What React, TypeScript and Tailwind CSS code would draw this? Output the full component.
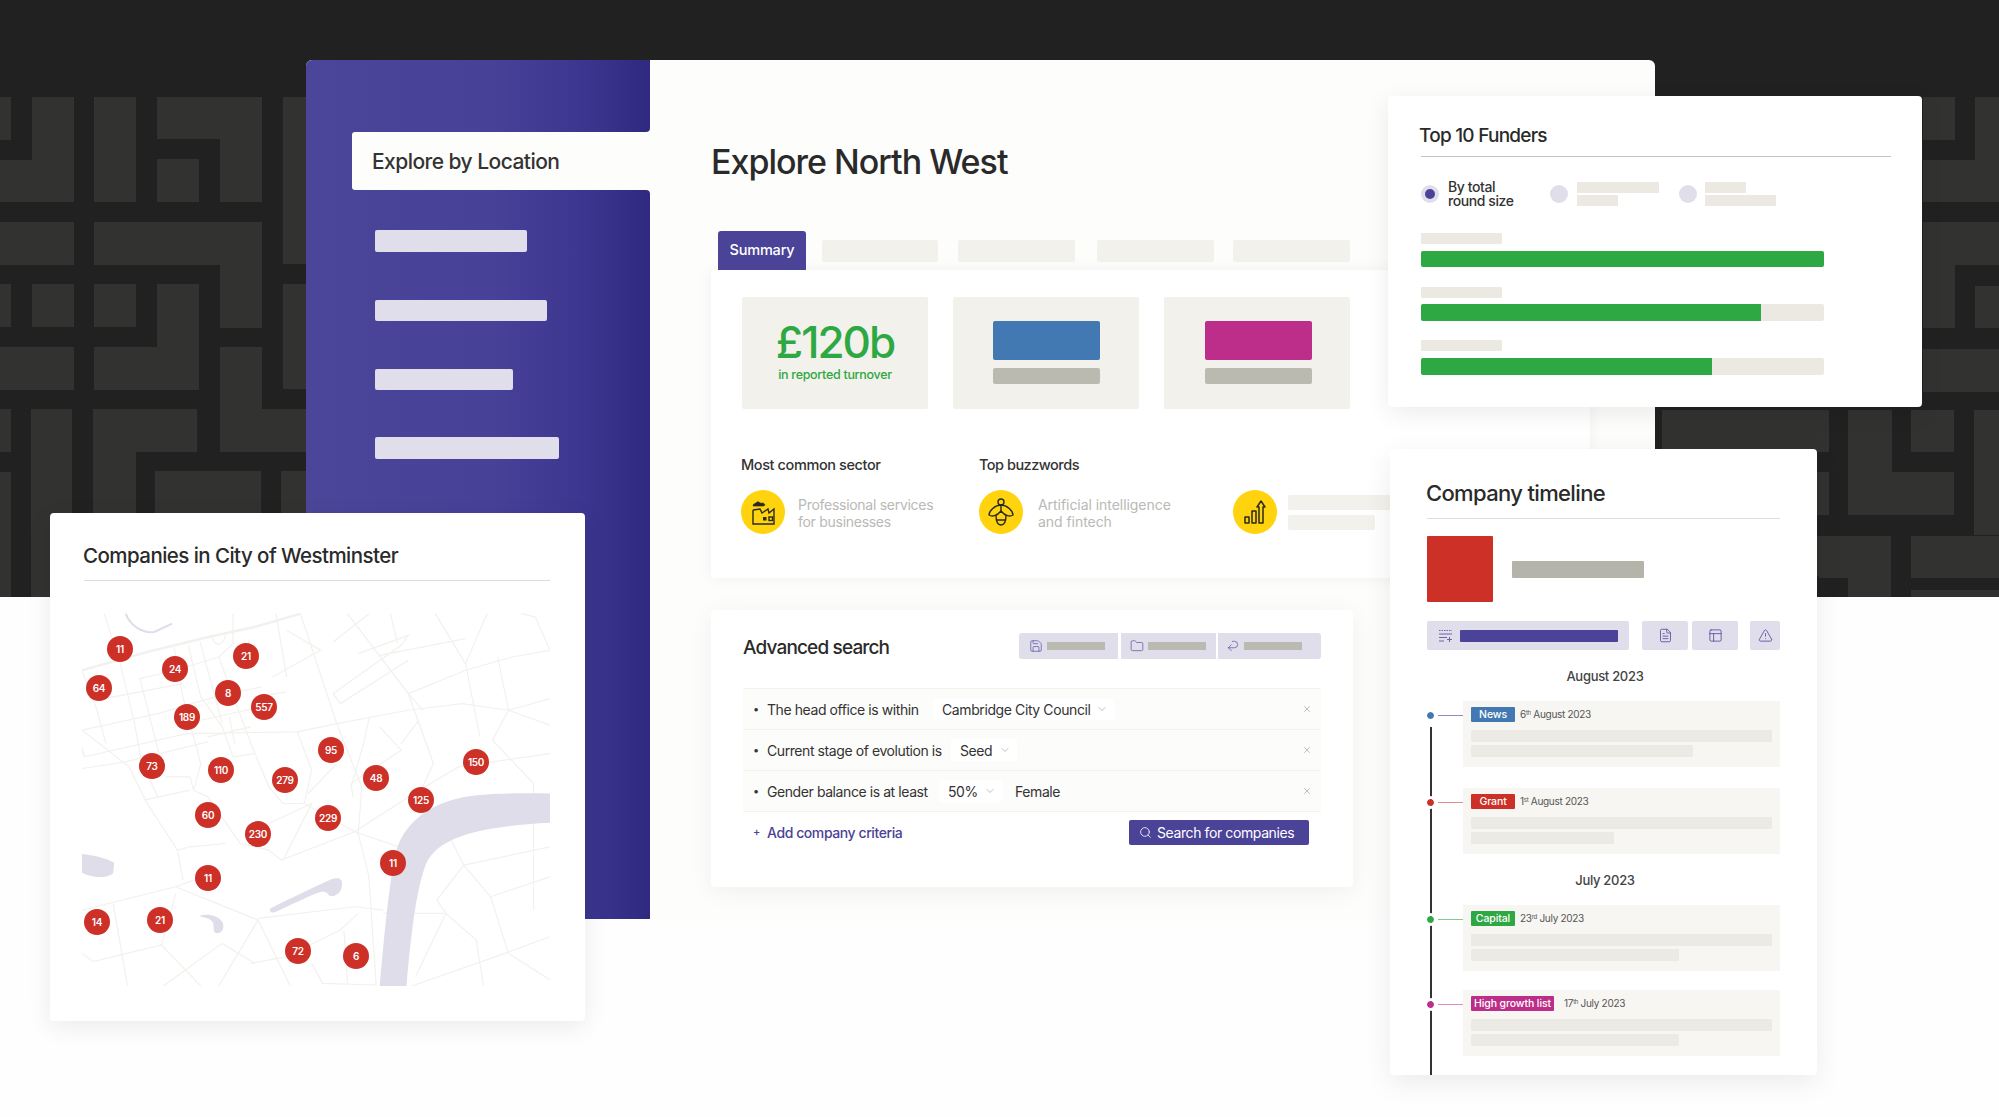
import React from "react";
import { Save, Folder, Undo2, FileText, PanelsTopLeft, TriangleAlert, Search, ChevronDown, X } from "lucide-react";

const tiles: [number, number, number, number][] = [
  [0, 97, 11, 43], [32, 97, 42, 105], [0, 160, 74, 42], [94, 97, 42, 105], [157, 97, 105, 42], [220, 139, 42, 63], [157, 159, 42, 43],
  [283, 97, 30, 167], [0, 222, 74, 43], [94, 222, 168, 43], [220, 265, 42, 63], [0, 284, 11, 43], [32, 284, 42, 43], [94, 284, 42, 43],
  [157, 284, 42, 106], [94, 347, 105, 43], [0, 347, 74, 43], [220, 347, 42, 105], [220, 409, 90, 43], [283, 284, 30, 105],
  [0, 409, 11, 43], [0, 472, 11, 125], [31, 409, 41, 188], [93, 409, 104, 43], [93, 452, 43, 145], [155, 471, 106, 126], [281, 471, 30, 126],
  [1923, 97, 32, 43], [1975, 97, 24, 63], [1923, 160, 76, 42], [1923, 222, 76, 43], [1923, 265, 32, 63], [1975, 286, 24, 42], [1923, 349, 76, 43],
  [1662, 410, 167, 42], [1662, 472, 167, 43], [1662, 536, 167, 40], [1848, 410, 44, 105], [1848, 472, 106, 43], [1911, 410, 43, 42], [1974, 410, 25, 125],
  [1911, 536, 88, 42], [1819, 536, 72, 42], [1848, 578, 43, 19], [1911, 590, 88, 7],
];

const roads = [
  "M180 310 L225 460 L265 640 L285 760 L330 860", "M118 480 L160 600 L185 700", "M280 505 L345 780",
  "M375 410 L400 560 L450 760 L430 840 L470 860 L560 1000 L640 1020 L675 1050 L880 965", "M415 405 L450 560 L510 650 L540 740 L600 730",
  "M448 395 L510 640", "M480 378 C490 410 510 410 520 375", "M540 310 L540 400 L500 440 L590 700 L640 830 L680 880 L740 880 L890 970",
  "M118 660 L330 610 L490 560 L620 530", "M118 710 L125 740 L410 670 L720 665 L830 640 L1030 600 L1180 580 L1310 600 L1426 645",
  "M118 775 L240 755 L470 695", "M118 660 L250 770 L300 880 L385 1020 L400 1110", "M660 310 L690 500", "M730 315 L830 640 L900 830 L890 970",
  "M820 395 L920 310", "M690 360 L785 420 L650 500", "M860 310 L1030 550 L1100 760 L1070 830", "M890 430 L1030 375 L1010 405 L820 550 L840 580 L1030 450",
  "M980 310 L1000 400", "M950 435 L1190 385", "M1105 310 L1190 460 L1230 680", "M1250 310 L1190 460", "M1030 550 L1190 480 L1320 440 L1426 420",
  "M1345 310 L1385 320 L1426 420", "M1280 440 L1310 600 L1265 690 L1380 820 L1380 1200", "M1070 600 L1030 550", "M1426 565 L1310 600",
  "M720 665 L760 780 L740 880", "M830 760 L750 850", "M950 650 L1010 720 L870 820 L875 860", "M920 625 L905 700 L870 830", "M1010 700 L1060 630",
  "M640 940 L760 880 L680 1050", "M880 965 L1030 1020", "M880 965 L1060 840 L1170 770 L1426 730", "M1150 990 L1185 1065 L1260 1160 L1310 1330 L1426 1410",
  "M1185 1065 L1426 1010", "M1185 1065 L1110 1170 L1135 1210 L1220 1290 L1240 1428", "M1260 1160 L1426 1100", "M960 1210 L1130 1210",
  "M1040 1428 L1300 1330 L1426 1280", "M1135 1210 L1050 1400", "M118 1200 L380 1130 L430 1110", "M380 1130 L610 1230 L700 1428", "M610 1225 L880 1190 L960 1200",
  "M610 1230 L500 1428", "M205 1180 L245 1428", "M118 1330 L150 1355 L340 1305 L450 1428", "M340 1305 L380 1150", "M590 1360 L690 1340 L840 1260 L890 1210",
  "M760 1360 L790 1420 L940 1425 L920 1100 L890 970", "M850 1260 L860 1420", "M345 1428 L510 1300 L600 1360",
  "M280 505 L380 480 L500 440", "M180 565 L400 520", "M450 630 L620 590", "M470 680 L590 650", "M530 620 L545 700", "M600 560 L690 545", "M118 720 L125 740",
  "M290 870 L420 840", "M520 1000 L420 1010 L385 1020", "M350 800 L420 800 L430 840",
];

const pins: [string, number, number][] = [
  ["11", 119, 649], ["24", 174, 669], ["21", 245, 656], ["64", 98, 688], ["8", 227, 693], ["557", 263, 707], ["189", 186, 717], ["95", 330, 750],
  ["73", 151, 766], ["110", 220, 770], ["279", 284, 780], ["48", 375, 778], ["150", 475, 762], ["125", 420, 800], ["60", 207, 815], ["229", 327, 818],
  ["230", 257, 834], ["11", 207, 878], ["11", 392, 863], ["14", 96, 922], ["21", 159, 920], ["72", 297, 951], ["6", 355, 956],
];

function Backdrop() {
  return (
    <svg className="absolute left-0 top-0" width="1999" height="597" viewBox="0 0 1999 597">
      <rect width="1999" height="597" fill="#212121" />
      {tiles.map(([x, y, w, h], i) => (
        <rect key={i} x={x} y={y} width={w} height={h} fill="#323231" />
      ))}
    </svg>
  );
}

function FactoryIcon() {
  return (
    <svg width="26" height="28" viewBox="0 0 26 28" fill="none" stroke="#2a2a20" strokeWidth="1.4">
      <path d="M3 12V26H24V11L19 15L18 11L12 15L10 11L3 12" />
      <path d="M3 8C3 5 6 6 7 4C9 3 10 6 12 5C15 5 16 8 13 8Z" fill="#2a2a20" strokeWidth="0.6" />
      <rect x="13" y="19" width="3.5" height="3.5" fill="#2a2a20" stroke="none" />
      <rect x="19" y="19" width="3.5" height="3.5" />
    </svg>
  );
}

function BeeIcon() {
  return (
    <svg width="28" height="30" viewBox="0 0 28 30" fill="none" stroke="#2a2a20" strokeWidth="1.4" strokeLinejoin="round">
      <circle cx="14" cy="5" r="3" />
      <path d="M14 8C8 8 2 14 2 18C5 20 10 19 14 14C18 19 23 20 26 18C26 14 20 8 14 8Z" />
      <path d="M9 18C9 24 11 28 14 28C17 28 19 24 19 18" />
      <path d="M14 8V15M9.5 23H18.5" />
    </svg>
  );
}

function GrowthIcon() {
  return (
    <svg width="26" height="28" viewBox="0 0 26 28" fill="none" stroke="#2a2a20" strokeWidth="1.5" strokeLinejoin="round">
      <rect x="3" y="19" width="4" height="6" />
      <rect x="10" y="13" width="4" height="12" />
      <path d="M17 25V9H15L19 3L23 9H21V25Z" />
    </svg>
  );
}

function SortAddIcon() {
  return (
    <svg width="15" height="15" viewBox="0 0 15 15" fill="none" stroke="#6a64a8" strokeWidth="1">
      <path d="M1 2.5H14" strokeDasharray="1.5 1" />
      <path d="M1 6H14M1 9.5H9M1 13H6M11.5 9V14M9 11.5H14" />
    </svg>
  );
}

function Tile({ className }: { className: string }) {
  return <div className={"rounded-[2px] " + className} />;
}

function StatTile({ children }: { children: React.ReactNode }) {
  return <div className="flex h-[112px] w-[186px] flex-col items-center rounded-[2px] bg-[#f3f1ec]">{children}</div>;
}

function StatPlaceholder({ color, shift }: { color: string; shift: string }) {
  return (
    <>
      <div className={"mt-[24px] h-[39px] w-[107px] rounded-[2px] " + color + " " + shift} />
      <div className={"mt-[8px] h-[16px] w-[107px] rounded-[2px] bg-[#babab1] " + shift} />
    </>
  );
}

function Sector({ icon, lines, gap }: { icon: React.ReactNode; lines: string[]; gap: string }) {
  return (
    <div className="flex items-center">
      <div className="flex h-[44px] w-[44px] items-center justify-center rounded-full bg-[#ffd30d]">{icon}</div>
      <div className={"mt-[2px] text-[14px] leading-[17px] text-[#b9b9b5] " + gap}>
        {lines.map((l) => (
          <div key={l}>{l}</div>
        ))}
      </div>
    </div>
  );
}

function ToolbarButton({ icon, className }: { icon: React.ReactNode; className: string }) {
  return (
    <div className={"flex h-[26px] items-center bg-[#e0deea] text-[#5a54a3] " + className}>
      {icon}
      <div className="ml-[4px] h-[8px] w-[58px] bg-[#babab1]" />
    </div>
  );
}

function Criteria({ text, textW, children }: { text: string; textW: string; children: React.ReactNode }) {
  return (
    <div className="flex h-[41px] items-center border-b border-[#f3f3ee] bg-[#fcfcfa] pl-[10px] pr-[9px] text-[14px] tracking-[-0.42px] text-[#333]">
      <span className="w-[14px] text-[11px]">•</span>
      <span className={textW}>{text}</span>
      {children}
      <X className="ml-auto text-[#999]" size={10} strokeWidth={1.5} />
    </div>
  );
}

function Select({ label, className }: { label: string; className: string }) {
  return (
    <div className={"flex h-[22px] items-center rounded-[2px] bg-white pl-[9px] text-[14px] " + className}>
      <span>{label}</span>
      <ChevronDown className="ml-auto mr-[6px] text-[#999]" size={12} strokeWidth={1.25} />
    </div>
  );
}

function FunderBar({ labelMt, barH, fill }: { labelMt: string; barH: string; fill: string }) {
  return (
    <div className={labelMt}>
      <div className="h-[11px] w-[81px] rounded-[1px] bg-[#ece9e3]" />
      <div className={"w-[403px] overflow-hidden rounded-[2px] bg-[#ece9e3] " + barH}>
        <div className={"h-full bg-[#2ea843] " + fill} />
      </div>
    </div>
  );
}

function Radio({ on }: { on?: boolean }) {
  return (
    <div className="flex h-[18px] w-[18px] items-center justify-center rounded-full bg-[#e0deea]">
      {on && <div className="h-[10px] w-[10px] rounded-full bg-[#4a4397]" />}
    </div>
  );
}

function Event({
  badge, badgeBg, badgeW, dateW, date, sup, rest, line2, dot, rule, className,
}: {
  badge: string; badgeBg: string; badgeW: string; dateW: string; date: string; sup: string; rest: string; line2: string; dot: string; rule: string; className: string;
}) {
  return (
    <div className={"flex " + className}>
      <div className="mt-[10px] flex h-[9px] w-[36px] items-center">
        <div className={"relative h-[7px] w-[7px] rounded-full outline-[3px] outline-white " + dot} />
        <div className={"ml-[4px] h-[1.5px] w-[25px] " + rule} />
      </div>
      <div className="h-[66px] w-[317px] bg-[#f7f6f2] px-[8px] pt-[6px]">
        <div className="flex h-[15px] items-center">
          <div className={"flex h-[15px] items-center justify-center rounded-[1px] text-[10.5px] font-medium tracking-[-0.1px] text-white " + badgeBg + " " + badgeW}>{badge}</div>
          <div className={"text-[10px] tracking-[-0.3px] text-[#555] " + dateW}>
            {date}
            <sup className="text-[6px]">{sup}</sup> {rest}
          </div>
        </div>
        <div className="mt-[8px] h-[12px] w-[301px] rounded-[1px] bg-[#eceae4]" />
        <div className={"mt-[3px] h-[12px] rounded-[1px] bg-[#eceae4] " + line2} />
      </div>
    </div>
  );
}

export default function App() {
  const sidebarBg = "bg-[linear-gradient(90deg,#4b4699_0%,#474198_55%,#3c3690_80%,#2f2a80_100%)]";
  return (
    <div className="relative h-[1117px] w-[1999px] overflow-hidden bg-[#fefefe] text-[#2a2a2a] [font-family:Inter,'Liberation_Sans',sans-serif]">
      <Backdrop />

      {/* Main window */}
      <div className="absolute left-[306px] top-[60px] flex h-[859px] w-[1349px] rounded-t-[6px] bg-[#fdfdfb]">
        <aside className="flex w-[344px] flex-col">
          <div className={"h-[72px] rounded-tl-[6px] rounded-br-[4px] " + sidebarBg} />
          <div className={"pl-[46px] " + sidebarBg}>
            <div className="flex h-[58px] items-center rounded-l-[3px] bg-[#fdfdfb] pl-[20px] pt-[2px] text-[21px] font-medium tracking-[-0.55px] text-[#333]">
              Explore by Location
            </div>
          </div>
          <div className={"flex-1 rounded-tr-[4px] pl-[69px] pt-[40px] " + sidebarBg}>
            <div className="h-[22px] w-[152px] rounded-[2px] bg-[#e0deea]" />
            <div className="mt-[48px] h-[21px] w-[172px] rounded-[2px] bg-[#e0deea]" />
            <div className="mt-[48px] h-[21px] w-[138px] rounded-[2px] bg-[#e0deea]" />
            <div className="mt-[47px] h-[22px] w-[184px] rounded-[2px] bg-[#e0deea]" />
          </div>
        </aside>

        <main className="pl-[61px] pt-[82px]">
          <h1 className="h-[40px] text-[34px] font-medium leading-[40px] tracking-[-1px] text-[#2a2a2a]">Explore North West</h1>

          <div className="ml-[7px] mt-[49px] flex h-[39px] items-center">
            <div className="flex h-[39px] w-[88px] items-center justify-center rounded-t-[3px] bg-[#4a4397] pb-[2px] text-[14.5px] font-medium tracking-[-0.2px] text-white">Summary</div>
            <Tile className="ml-[16px] h-[22px] w-[116px] bg-[#f3f1ec]" />
            <Tile className="ml-[20px] h-[22px] w-[117px] bg-[#f3f1ec]" />
            <Tile className="ml-[22px] h-[22px] w-[117px] bg-[#f3f1ec]" />
            <Tile className="ml-[19px] h-[22px] w-[117px] bg-[#f3f1ec]" />
          </div>

          <section className="h-[308px] w-[879px] rounded-[2px] bg-white pl-[30px] pt-[27px] shadow-[0_0_16px_rgba(0,0,0,0.05)]">
            <div className="ml-[1px] flex gap-[25px]">
              <StatTile>
                <div className="mt-[20px] text-[44px] font-medium leading-[50px] tracking-[-2px] text-[#2ea843]">£120b</div>
                <div className="text-[12.5px] font-medium leading-[16px] tracking-[-0.3px] text-[#2ea843]">in reported turnover</div>
              </StatTile>
              <StatTile><StatPlaceholder color="bg-[#4279b2]" shift="ml-0" /></StatTile>
              <StatTile><StatPlaceholder color="bg-[#bd2e8a]" shift="ml-[2px]" /></StatTile>
            </div>
            <div className="mt-[46px] grid grid-cols-[238px_254px_1fr] grid-rows-[20px_auto] gap-y-[15px]">
              <div className="text-[14.5px] font-medium leading-[20px] tracking-[-0.4px] text-[#333]">Most common sector</div>
              <div className="text-[14.5px] font-medium leading-[20px] tracking-[-0.5px] text-[#333]">Top buzzwords</div>
              <div />
              <Sector icon={<FactoryIcon />} lines={["Professional services", "for businesses"]} gap="ml-[13px] tracking-[-0.28px]" />
              <Sector icon={<BeeIcon />} lines={["Artificial intelligence", "and fintech"]} gap="ml-[15px] tracking-[-0.05px]" />
              <div className="flex items-center">
                <div className="flex h-[44px] w-[44px] items-center justify-center rounded-full bg-[#ffd30d]"><GrowthIcon /></div>
                <div className="ml-[11px]">
                  <div className="h-[15px] w-[150px] rounded-[2px] bg-[#f3f1ec]" />
                  <div className="mt-[5px] h-[15px] w-[87px] rounded-[2px] bg-[#f3f1ec]" />
                </div>
              </div>
            </div>
          </section>

          <section className="mt-[32px] h-[277px] w-[642px] rounded-[4px] bg-white px-[32px] pt-[23px] shadow-[0_4px_24px_rgba(0,0,0,0.06)]">
            <div className="flex h-[26px] items-center justify-between">
              <h2 className="mt-[4px] text-[19px] font-medium tracking-[-0.85px] text-[#2a2a2a]">Advanced search</h2>
              <div className="flex gap-[2.5px]">
                <ToolbarButton className="w-[99px] rounded-l-[3px] pl-[10px]" icon={<Save size={14} strokeWidth={1.25} />} />
                <ToolbarButton className="w-[95px] pl-[9px]" icon={<Folder size={14} strokeWidth={1.25} />} />
                <ToolbarButton className="w-[103px] rounded-r-[3px] pl-[8px]" icon={<Undo2 size={14} strokeWidth={1.25} className="-scale-y-100" />} />
              </div>
            </div>
            <div className="mt-[29px] border-t border-[#f3f3ee]">
              <Criteria text="The head office is within" textW="w-[166px]">
                <Select label="Cambridge City Council" className="w-[181px] tracking-[-0.4px]" />
              </Criteria>
              <Criteria text="Current stage of evolution is" textW="w-[184px]">
                <Select label="Seed" className="w-[66px]" />
              </Criteria>
              <Criteria text="Gender balance is at least" textW="w-[172px]">
                <Select label="50%" className="w-[63px]" />
                <span className="ml-[13px]">Female</span>
              </Criteria>
              <div className="flex h-[41px] items-center pl-[10px] pr-[12px] text-[14px] font-medium tracking-[-0.42px] text-[#4a4397]">
                <span className="w-[14px] text-[11px]">+</span>
                <span>Add company criteria</span>
                <div className="ml-auto flex h-[25px] w-[180px] items-center rounded-[2px] bg-[#4a4397] pl-[10px] text-white">
                  <Search size={13} strokeWidth={1.5} />
                  <span className="ml-[5px] font-normal tracking-[-0.4px]">Search for companies</span>
                </div>
              </div>
            </div>
          </section>
        </main>
      </div>

      {/* Westminster map card */}
      <section className="absolute left-[50px] top-[513px] h-[508px] w-[535px] rounded-[4px] bg-white pl-[33px] pt-[30px] shadow-[0_6px_24px_rgba(0,0,0,0.08)]">
        <h2 className="h-[26px] text-[20.5px] font-medium leading-[26px] tracking-[-0.55px]">Companies in City of Westminster</h2>
        <div className="ml-[1px] mt-[11px] w-[466px] border-b border-[#dcdcd8]" />
        <div className="relative -ml-[1px] mt-[32px] h-[373px] w-[468px]">
          <svg className="h-full w-full" viewBox="118 308 1308 1120" preserveAspectRatio="none" fill="none">
            {roads.map((d, i) => (
              <path key={i} d={d} stroke="#f3f1ed" strokeWidth="1.2" vectorEffect="non-scaling-stroke" />
            ))}
            <path d="M118 480 L300 425 L480 378 L600 350 L730 310" stroke="#f3f1ed" strokeWidth="2.5" vectorEffect="non-scaling-stroke" />
            <path d="M1426 850 C1300 848 1210 850 1150 870 C1070 895 1020 950 1000 1010 C980 1080 965 1250 950 1428 L1025 1428 C1035 1300 1050 1150 1075 1075 C1095 1010 1150 985 1220 965 C1280 950 1350 942 1426 938 Z" fill="#dfdde9" />
            <path d="M118 1032 C150 1035 185 1045 208 1058 L205 1090 C185 1105 150 1105 118 1088 Z" fill="#dfdde9" />
            <path d="M645 1195 C700 1165 770 1130 810 1110 C830 1100 845 1105 845 1120 C845 1140 835 1160 810 1158 C800 1140 790 1140 750 1160 C710 1180 680 1195 660 1205 C648 1210 640 1205 645 1195 Z" fill="#dfdde9" />
            <path d="M445 1218 C470 1210 495 1215 510 1235 C520 1255 505 1275 490 1268 C480 1255 495 1235 470 1225 Z" fill="#dfdde9" />
            <path d="M240 310 C255 350 290 370 320 365 L370 340" stroke="#dfdde9" strokeWidth="2" vectorEffect="non-scaling-stroke" />
          </svg>
          {pins.map(([n, x, y], i) => (
            <div
              key={i}
              className="absolute flex h-[26px] w-[26px] items-center justify-center rounded-full bg-[#cc3027] text-[10px] font-semibold tracking-[-0.3px] text-white"
              style={{ left: x - 82 - 12, top: y - 613 - 13 }}
            >
              {n}
            </div>
          ))}
        </div>
      </section>

      {/* Funders card */}
      <section className="absolute left-[1388px] top-[96px] h-[311px] w-[534px] rounded-[4px] bg-white pl-[31px] pt-[27px] shadow-[0_6px_24px_rgba(0,0,0,0.08)]">
        <h2 className="mt-[1px] h-[23px] text-[19px] font-medium leading-[24px] tracking-[-0.75px]">Top 10 Funders</h2>
        <div className="ml-[2px] mt-[9px] w-[470px] border-b border-[#c5c5c0]" />
        <div className="ml-[2px] mt-[23px] flex h-[28px]">
          <div className="flex w-[129px] items-center">
            <Radio on />
            <div className="ml-[9px] text-[14px] font-medium leading-[14px] tracking-[-0.42px] text-[#333]">By total<br />round size</div>
          </div>
          <div className="flex w-[129px] items-center">
            <Radio />
            <div className="ml-[9px]">
              <div className="h-[11px] w-[82px] bg-[#ece9e3]" />
              <div className="mt-[2px] h-[11px] w-[41px] bg-[#ece9e3]" />
            </div>
          </div>
          <div className="flex items-center">
            <Radio />
            <div className="ml-[8px]">
              <div className="h-[11px] w-[41px] bg-[#ece9e3]" />
              <div className="mt-[2px] h-[11px] w-[71px] bg-[#ece9e3]" />
            </div>
          </div>
        </div>
        <div className="ml-[2px]">
          <FunderBar labelMt="mt-[25px]" barH="mt-[7px] h-[16px]" fill="w-full" />
          <FunderBar labelMt="mt-[20px]" barH="mt-[6px] h-[17px]" fill="w-[340px]" />
          <FunderBar labelMt="mt-[19px]" barH="mt-[7px] h-[17px]" fill="w-[291px]" />
        </div>
      </section>

      {/* Timeline card */}
      <section className="absolute left-[1390px] top-[449px] h-[626px] w-[427px] overflow-hidden rounded-[4px] bg-white pl-[36px] pt-[30px] shadow-[0_8px_28px_rgba(0,0,0,0.08)]">
        <h2 className="h-[28px] text-[22px] font-medium leading-[28px] tracking-[-0.65px]">Company timeline</h2>
        <div className="ml-[1px] mt-[11px] w-[353px] border-b border-[#dcdcd8]" />
        <div className="ml-[1px] mt-[17px] flex items-center">
          <div className="h-[66px] w-[66px] rounded-[1px] bg-[#cc3027]" />
          <div className="ml-[19px] h-[17px] w-[132px] rounded-[1px] bg-[#b4b4aa]" />
        </div>
        <div className="ml-[1px] mt-[19px] flex h-[29px] text-[#4a4397]">
          <div className="flex w-[202px] items-center rounded-[2px] bg-[#e0deea] pl-[11px]">
            <SortAddIcon />
            <div className="ml-[7px] h-[12px] w-[158px] rounded-[1px] bg-[#4a4397]" />
          </div>
          <div className="ml-[13px] flex w-[46px] items-center justify-center rounded-[2px] bg-[#e0deea]"><FileText size={15} strokeWidth={1.25} /></div>
          <div className="ml-[4px] flex w-[46px] items-center justify-center rounded-[2px] bg-[#e0deea]"><PanelsTopLeft size={15} strokeWidth={1.25} /></div>
          <div className="ml-[12px] flex w-[30px] items-center justify-center rounded-[2px] bg-[#e0deea]"><TriangleAlert size={15} strokeWidth={1.25} /></div>
        </div>
        <div className="mt-[16px] w-[357px] pl-[1px] text-center text-[13px] font-medium leading-[20px] tracking-[-0.3px] text-[#444]">August 2023</div>
        <div className="relative ml-[1px]">
          <div className="absolute bottom-[-30px] left-[3px] top-[26px] w-[1.5px] bg-[#333]" />
          <Event className="relative mt-[15px]" badge="News" badgeBg="bg-[#4279b2]" badgeW="w-[44px]" dateW="ml-[5px]" date="6" sup="th" rest="August 2023" line2="w-[222px]" dot="bg-[#4279b2]" rule="bg-[#8f8bc0]" />
          <Event className="relative mt-[21px]" badge="Grant" badgeBg="bg-[#cc3027]" badgeW="w-[44px]" dateW="ml-[5px]" date="1" sup="st" rest="August 2023" line2="w-[143px]" dot="bg-[#cc3027]" rule="bg-[#e08d88]" />
          <div className="relative mt-[16px] w-[356px] text-center text-[13px] font-medium leading-[20px] tracking-[-0.3px] text-[#444]">July 2023</div>
          <Event className="relative mt-[15px]" badge="Capital" badgeBg="bg-[#2ea843]" badgeW="w-[44px]" dateW="ml-[5px]" date="23" sup="rd" rest="July 2023" line2="w-[208px]" dot="bg-[#2ea843]" rule="bg-[#80cc8d]" />
          <Event className="relative mt-[19px]" badge="High growth list" badgeBg="bg-[#bd2e8a]" badgeW="w-[83px]" dateW="ml-[10px]" date="17" sup="th" rest="July 2023" line2="w-[208px]" dot="bg-[#bd2e8a]" rule="bg-[#dd8cbd]" />
        </div>
      </section>
    </div>
  );
}
